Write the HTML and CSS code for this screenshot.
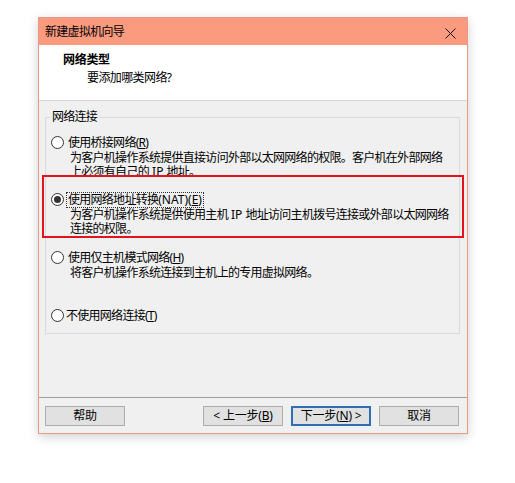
FILE: index.html
```html
<!DOCTYPE html>
<html lang="zh-CN">
<head>
<meta charset="utf-8">
<title>新建虚拟机向导</title>
<link rel="stylesheet" href="styles.css">
</head>
<body>
<div class="dialog">
  <div class="titlebar">
    <span class="title">新建虚拟机向导</span>
    <span class="close">
      <svg width="11" height="11" viewBox="0 0 11 11"><path d="M0.5 0.5 L10.5 10.5 M10.5 0.5 L0.5 10.5" stroke="#111" stroke-width="1" fill="none"/></svg>
    </span>
  </div>
  <div class="header">
    <div class="h-title">网络类型</div>
    <div class="h-sub">要添加哪类网络?</div>
  </div>
  <div class="body">
    <fieldset class="group">
      <legend>网络连接</legend>
      <div class="opt opt-clip">
        <div class="opt-row"><span class="radio"></span><span class="lbl">使用桥接网络(<u>R</u>)</span></div>
        <div class="desc">为客户机操作系统提供直接访问外部以太网网络的权限。客户机在外部网络<br>上必须有自己的<span class="lat"> IP </span>地址。</div>
      </div>
      <div class="highlight">
        <div class="opt">
          <div class="opt-row"><span class="radio checked"></span><span class="lbl focus">使用网络地址转换<span class="lat">(NAT)(<u>E</u>)</span></span></div>
          <div class="desc">为客户机操作系统提供使用主机<span class="lat"> IP </span>地址访问主机拨号连接或外部以太网网络<br>连接的权限。</div>
        </div>
      </div>
      <div class="opt opt-host">
        <div class="opt-row"><span class="radio"></span><span class="lbl">使用仅主机模式网络(<u>H</u>)</span></div>
        <div class="desc">将客户机操作系统连接到主机上的专用虚拟网络。</div>
      </div>
      <div class="opt opt-none">
        <div class="opt-row"><span class="radio"></span><span class="lbl tight">不使用网络连接(<u>T</u>)</span></div>
      </div>
    </fieldset>
  </div>
  <div class="footer">
    <button class="btn help">帮助</button>
    <button class="btn">&lt; 上一步(<u>B</u>)</button>
    <button class="btn default">下一步(<u>N</u>) &gt;</button>
    <button class="btn">取消</button>
  </div>
</div>
</body>
</html>
```
FILE: styles.css
```css
* { box-sizing: border-box; }
html, body { margin: 0; padding: 0; background: #fff; }
body {
  font-family: "Noto Sans", "Noto Sans CJK SC", sans-serif;
  font-size: 12px;
  color: #000;
  width: 515px;
  height: 483px;
  padding: 17px 0 0 38px;
}
.dialog {
  width: 430px;
  height: 417px;
  border: 1px solid #e89a86;
  background: #f0f0f0;
  display: flex;
  flex-direction: column;
  box-shadow: 0 3px 10px rgba(0,0,0,0.18);
}
.titlebar {
  height: 27px;
  background: #fa9a7f;
  display: flex;
  align-items: center;
  justify-content: space-between;
  padding: 0 11px 0 6px;
  flex: none;
}
.title { letter-spacing: -0.7px; line-height: 14px; margin-top: 1px; }
.close { display: flex; margin-top: 4px; }
.header {
  height: 56px;
  flex: none;
  background: #fff;
  border-bottom: 1px solid #d4d4d4;
  padding: 8px 0 0 24px;
  line-height: 14px;
  letter-spacing: -0.6px;
}
.h-title { font-weight: bold; letter-spacing: -0.3px; }
.h-sub { margin: 4px 0 0 24px; }
.body {
  flex: 1;
  padding: 9px 7px 0 6px;
  letter-spacing: -0.72px;
  line-height: 14px;
}
.lat { letter-spacing: 0; }
.group {
  margin: 0;
  border: 1px solid #dadada;
  padding: 11px 0 10px 0;
  min-width: 0;
}
.group legend {
  margin-left: 4px;
  padding: 0 2px;
  line-height: 14px;
}
.opt { padding-left: 5px; }
.opt-row { display: flex; align-items: center; height: 15px; }
.radio {
  width: 13px;
  height: 13px;
  border: 1px solid #333;
  border-radius: 50%;
  background: #fff;
  flex: none;
  display: flex;
  align-items: center;
  justify-content: center;
}
.radio.checked::after {
  content: "";
  width: 7px;
  height: 7px;
  border-radius: 50%;
  background: #333;
}
.lbl { margin-left: 4px; }
.lbl.tight { margin-left: 2px; }
.lbl.focus { outline: 1px dotted #333; outline-offset: 0; margin-left: 3px; padding: 0 1px; }
.desc { margin: 1px 0 0 19px; white-space: nowrap; }
.opt-clip { height: 40px; overflow: hidden; }
.highlight {
  margin: 0 -5px 0 -4px;
  border: 2px solid #e3121c;
  padding: 15px 0 0 2px;
}
.opt-host { margin-top: 12px; }
.opt-none { margin-top: 28px; }
.footer {
  flex: none;
  border-top: 1px solid #a0a0a0;
  display: flex;
  gap: 8px;
  padding: 8px 8px 7px 6px;
}
.btn {
  width: 80px;
  height: 20px;
  border: 1px solid #adadad;
  background: #e1e1e1;
  font-family: "Noto Sans", "Noto Sans CJK SC", sans-serif;
  font-size: 12px;
  letter-spacing: -0.2px;
  color: #000;
  padding: 0;
  line-height: 14px;
}
.btn.help { margin-right: auto; }
.btn.default { border: 2px solid #2c6db3; }
u { text-underline-offset: 1px; }
```
